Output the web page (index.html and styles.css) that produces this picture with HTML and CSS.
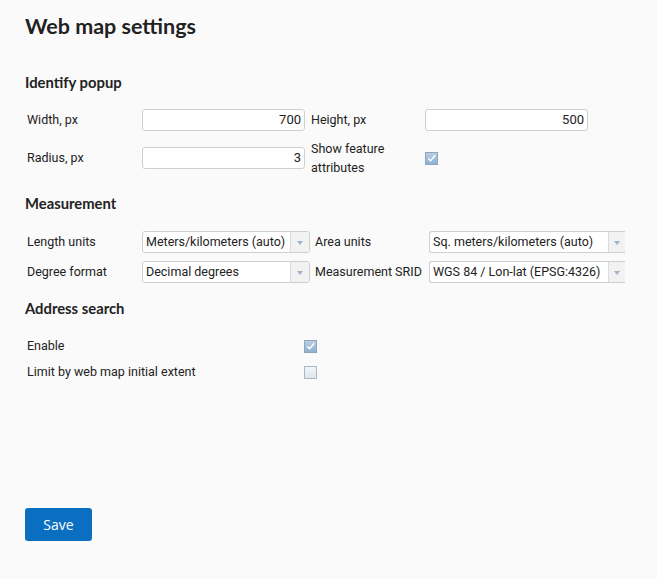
FILE: index.html
```html
<!DOCTYPE html>
<html>
<head>
<meta charset="utf-8">
<link rel="stylesheet" href="styles.css">
</head>
<body>
<div class="page">
  <h1 class="title">Web map settings</h1>

  <h2 class="section">Identify popup</h2>
  <div class="grid grid-popup">
    <div class="label">Width, px</div>
    <div class="input num">700</div>
    <div class="label">Height, px</div>
    <div class="input num">500</div>
    <div class="label">Radius, px</div>
    <div class="input num">3</div>
    <div class="label two">Show feature<br>attributes</div>
    <div class="cell"><span class="cb checked"><svg viewBox="0 0 12 12" width="12" height="12"><path d="M2.5 6.5 L5 9 L10 3" fill="none" stroke="#fff" stroke-width="1.6"/></svg></span></div>
  </div>

  <h2 class="section s2">Measurement</h2>
  <div class="grid grid-meas">
    <div class="label">Length units</div>
    <div class="select"><span class="val">Meters/kilometers (auto)</span><span class="arrow"><i></i></span></div>
    <div class="label">Area units</div>
    <div class="select clip"><span class="val">Sq. meters/kilometers (auto)</span><span class="arrow"><i></i></span></div>
    <div class="label">Degree format</div>
    <div class="select"><span class="val">Decimal degrees</span><span class="arrow"><i></i></span></div>
    <div class="label">Measurement SRID</div>
    <div class="select clip"><span class="val">WGS 84 / Lon-lat (EPSG:4326)</span><span class="arrow"><i></i></span></div>
  </div>

  <h2 class="section s3">Address search</h2>
  <div class="grid grid-addr">
    <div class="label">Enable</div>
    <div class="cell"><span class="cb checked"><svg viewBox="0 0 12 12" width="12" height="12"><path d="M2.5 6.5 L5 9 L10 3" fill="none" stroke="#fff" stroke-width="1.6"/></svg></span></div>
    <div class="label">Limit by web map initial extent</div>
    <div class="cell"><span class="cb"></span></div>
  </div>

  <div class="actions"><button class="btn">Save</button></div>
</div>
</body>
</html>
```

FILE: styles.css
```css
html, body {
  margin: 0;
  padding: 0;
  background: #fafafa;
}
body {
  font-family: Roboto, "Liberation Sans", sans-serif;
  font-size: 12.5px;
  color: #222;
  width: 657px;
  height: 579px;
  overflow: hidden;
}
.page {
  padding: 13px 0 0 25px;
  width: 600px;
  overflow: hidden;
}
.title {
  font-family: Lato, "Open Sans", sans-serif;
  font-weight: 700;
  font-size: 21.5px;
  color: #222;
  margin: 0;
  line-height: 27px;
}
.section {
  font-family: Lato, "Open Sans", sans-serif;
  font-weight: 700;
  font-size: 14.8px;
  color: #222;
  margin: 32px 0 0 0;
  line-height: 20px;
}
.s2 { margin-top: 16px; }
.s3 { margin-top: 15px; }
.grid {
  display: grid;
  align-items: center;
  justify-items: start;
  padding-left: 2px;
}
.grid-popup {
  grid-template-columns: 115px 169px 114px 164px;
  row-gap: 8px;
  margin-top: 17px;
}
.grid-popup .input { width: 163px; }
.grid-meas {
  grid-template-columns: 115px 173px 114px 196px;
  row-gap: 8px;
  margin-top: 18px;
}
.grid-meas > :nth-child(4n+2) { width: 168px; }
.grid-meas > :nth-child(4n) { width: 196px; }
.grid-addr {
  grid-template-columns: 277px 20px;
  row-gap: 8px;
  margin-top: 19px;
}
.label {
  line-height: 18px;
  color: #222;
  white-space: nowrap;
}
.label.two { line-height: 19px; }
.cell { display: flex; align-items: center; }
.input {
  box-sizing: border-box;
  height: 22px;
  border: 1px solid #cfcfcf;
  border-radius: 3px;
  background: #fff;
  line-height: 20px;
  padding: 0 3px;
  font-size: 13px;
}
.input.num { text-align: right; }
.select {
  box-sizing: border-box;
  height: 22px;
  border: 1px solid #cfcfcf;
  border-radius: 3px;
  background: #fff;
  display: flex;
  align-items: stretch;
  overflow: hidden;
}
.select .val {
  flex: 1;
  padding-left: 3px;
  line-height: 20px;
  white-space: nowrap;
  overflow: hidden;
}
.select .arrow {
  width: 18px;
  flex: none;
  border-left: 1px solid #dcdcdc;
  background: #f2f2f2;
  display: flex;
  align-items: center;
  justify-content: center;
}
.select .arrow i {
  width: 0;
  height: 0;
  border-left: 3.5px solid transparent;
  border-right: 3.5px solid transparent;
  border-top: 4px solid #9eb4cb;
  margin-top: 1px;
}
.select.clip {
  border-top-right-radius: 0;
  border-bottom-right-radius: 0;
  border-right: none;
}
.select.clip .arrow { width: 16px; }
.cb {
  box-sizing: border-box;
  width: 13px;
  height: 13px;
  border: 1px solid #a9b7c6;
  background: linear-gradient(180deg, #f3f6f9, #dde6ef);
  display: inline-flex;
  align-items: center;
  justify-content: center;
}
.cb.checked {
  background: linear-gradient(180deg, #b8cde2, #90b1d2);
  border-color: #8ea6bd;
}
.cb svg { display: block; }
.actions {
  margin-top: 127px;
}
.btn {
  font-family: "Open Sans", "Noto Sans", sans-serif;
  font-size: 14px;
  color: #fff;
  background: #0b6fc1;
  border: none;
  border-radius: 3px;
  width: 67px;
  height: 33px;
  padding: 0;
  cursor: pointer;
}
```
